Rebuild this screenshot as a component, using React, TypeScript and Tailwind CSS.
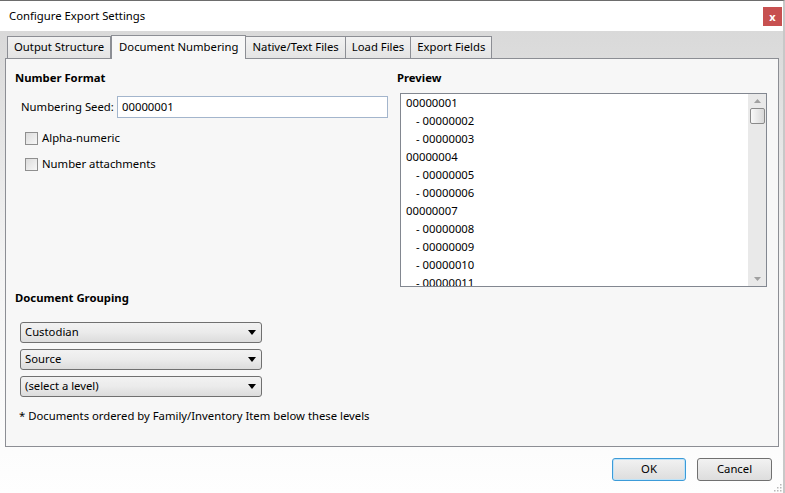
import React from "react";

const font = { fontFamily: '"Segoe UI", "Noto Sans", sans-serif' };

const previewRows = [
  "00000001",
  "- 00000002",
  "- 00000003",
  "00000004",
  "- 00000005",
  "- 00000006",
  "00000007",
  "- 00000008",
  "- 00000009",
  "- 00000010",
  "- 00000011",
];

function Tab({ label, active }: { label: string; active?: boolean }) {
  if (active) {
    return (
      <div className="relative z-10 -mb-px flex h-[24px] items-center whitespace-nowrap border border-b-0 border-[#8c8e94] bg-[#f7f7f7] px-[7px] text-[11.3px] text-black">
        {label}
      </div>
    );
  }
  return (
    <div className="flex h-[22px] items-center whitespace-nowrap border border-b-0 border-l-0 border-[#8c8e94] bg-gradient-to-b from-[#f2f2f2] to-[#e4e4e4] px-[6px] text-[11.3px] text-black first:border-l">
      {label}
    </div>
  );
}

function Checkbox({ label }: { label: string }) {
  return (
    <label className="flex h-[14px] items-center gap-[4px] whitespace-nowrap text-[11.3px] text-black">
      <span className="h-[13px] w-[13px] border border-[#8f8f8f] bg-gradient-to-br from-[#dcdcdc] to-[#f7f7f7]" />
      {label}
    </label>
  );
}

function Select({ value }: { value: string }) {
  return (
    <div className="flex h-[21px] w-[242px] items-center justify-between rounded-[3px] border border-[#707070] bg-gradient-to-b from-[#f2f2f2] via-[#ebebeb] to-[#dcdcdc] pl-[4px] pr-[5px] text-[11.3px] text-black">
      <span>{value}</span>
      <svg width="8" height="5" viewBox="0 0 8 5">
        <path d="M0 0 H8 L4 5 Z" fill="#000" />
      </svg>
    </div>
  );
}

function Button({ label, primary }: { label: string; primary?: boolean }) {
  return (
    <button
      className={`flex h-[23px] items-center justify-center rounded-[3px] border bg-gradient-to-b from-[#f2f2f2] to-[#dddddd] text-[11.3px] text-black ${
        primary ? "w-[74px] border-[#3c9bd8] shadow-[inset_0_0_0_1px_#bfe3f8]" : "w-[75px] border-[#707070]"
      }`}
    >
      {label}
    </button>
  );
}

export default function App() {
  return (
    <div style={font} className="flex h-[493px] w-[785px] flex-col overflow-hidden border-r-2 border-t border-r-[#c8c8c8] border-t-[#6d6d6d] bg-white">
      <div className="flex h-[30px] shrink-0 items-center justify-between bg-white pl-[9px] pr-[1px]">
        <span className="text-[11.3px] text-black">Configure Export Settings</span>
        <div className="flex h-[19px] w-[19px] items-center justify-center bg-[#c75050] text-[11px] font-bold leading-none text-white">
          x
        </div>
      </div>

      <div className="flex flex-1 flex-col bg-gradient-to-b from-[#d9d9d9] via-[#f3f3f3] to-[#fefefe]">
        <div className="flex items-end pl-[7px] pt-[4px]">
          <Tab label="Output Structure" />
          <Tab label="Document Numbering" active />
          <Tab label="Native/Text Files" />
          <Tab label="Load Files" />
          <Tab label="Export Fields" />
        </div>

        <div className="ml-[5px] flex h-[389px] w-[774px] flex-col border border-[#8c8e94] bg-[#f7f7f7] pl-[9px] pt-[11px]">
          <div className="flex">
            <div className="flex w-[382px] flex-col">
              <div className="text-[11.3px] font-bold leading-[16px] text-black">Number Format</div>
              <div className="mt-[10px] flex items-center pl-[6px]">
                <span className="w-[96px] whitespace-nowrap text-[11.3px] text-black">Numbering Seed:</span>
                <div className="flex h-[22px] w-[271px] items-center border border-[#a3b5cc] bg-white pl-[4px] text-[11.3px] text-black">
                  00000001
                </div>
              </div>
              <div className="mt-[13px] flex flex-col gap-[12px] pl-[10px]">
                <Checkbox label="Alpha-numeric" />
                <Checkbox label="Number attachments" />
              </div>
            </div>

            <div className="flex flex-col">
              <div className="text-[11.3px] font-bold leading-[16px] text-black">Preview</div>
              <div className="ml-[3px] mt-[7px] flex h-[194px] w-[367px] border border-[#828790] bg-white">
                <div className="h-[192px] flex-1 overflow-hidden pl-[5px]">
                  {previewRows.map((row, i) => (
                    <div
                      key={i}
                      className={`text-[11.3px] leading-[18px] text-black ${row.startsWith("-") ? "pl-[10px]" : ""}`}
                    >
                      {row}
                    </div>
                  ))}
                </div>
                <div className="flex w-[18px] flex-col items-center bg-[#e9e9e9] py-[5px]">
                  <svg width="7" height="4" viewBox="0 0 7 4">
                    <path d="M0 4 L3.5 0 L7 4 Z" fill="#a0a0a0" />
                  </svg>
                  <div className="mt-[5px] h-[16px] w-[15px] rounded-[2px] border border-[#8a8a8a] bg-gradient-to-r from-[#f8f8f8] to-[#d8d8d8]" />
                  <div className="flex-1" />
                  <svg width="7" height="4" viewBox="0 0 7 4">
                    <path d="M0 0 L7 0 L3.5 4 Z" fill="#a0a0a0" />
                  </svg>
                </div>
              </div>
            </div>
          </div>

          <div className="mt-[3px] text-[11.3px] font-bold leading-[16px] text-black">Document Grouping</div>
          <div className="mt-[16px] flex flex-col gap-[6px] pl-[5px]">
            <Select value="Custodian" />
            <Select value="Source" />
            <Select value="(select a level)" />
          </div>
          <div className="mt-[11px] pl-[4px] text-[11.3px] text-black">
            * Documents ordered by Family/Inventory Item below these levels
          </div>
        </div>

        <div className="relative flex flex-1 items-start justify-end gap-[11px] pr-[11px] pt-[11px]">
          <Button label="OK" primary />
          <Button label="Cancel" />
          <svg className="absolute bottom-[1px] right-[1px]" width="9" height="9" viewBox="0 0 9 9">
            {[
              [7, 1],
              [7, 4],
              [4, 4],
              [7, 7],
              [4, 7],
              [1, 7],
            ].map(([x, y], i) => (
              <rect key={i} x={x} y={y} width="1.5" height="1.5" fill="#b8b8b8" />
            ))}
          </svg>
        </div>
      </div>
    </div>
  );
}
